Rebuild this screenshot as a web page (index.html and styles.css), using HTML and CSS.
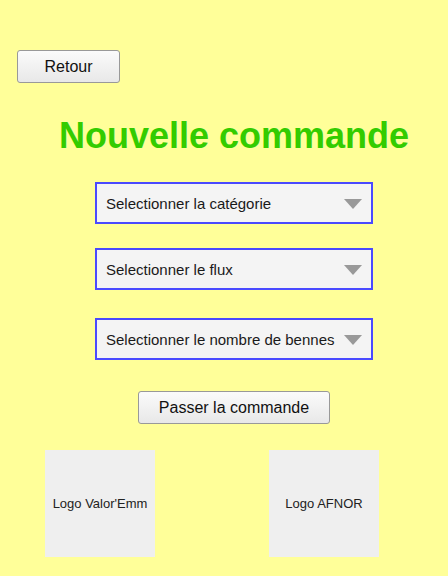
FILE: index.html
```html
<!DOCTYPE html>
<html lang="fr">
<head>
<meta charset="utf-8">
<title>Nouvelle commande</title>
<link rel="stylesheet" href="styles.css">
</head>
<body>
<div class="page">
  <div class="top">
    <button class="btn back">Retour</button>
  </div>
  <main class="main">
    <h1 class="title">Nouvelle commande</h1>
    <div class="select s1"><span>Selectionner la catégorie</span><i class="arrow"></i></div>
    <div class="select s2"><span>Selectionner le flux</span><i class="arrow"></i></div>
    <div class="select s3"><span>Selectionner le nombre de bennes</span><i class="arrow"></i></div>
    <button class="btn order">Passer la commande</button>
  </main>
  <div class="logos">
    <div class="logo l1">Logo Valor'Emm</div>
    <div class="logo l2">Logo AFNOR</div>
  </div>
</div>
</body>
</html>
```
FILE: styles.css
```css
html, body {
  margin: 0;
  padding: 0;
  background: #ffff99;
  font-family: "Liberation Sans", Arial, sans-serif;
}
.page {
  width: 448px;
  height: 576px;
  overflow: hidden;
}
.top {
  padding: 50px 0 0 17px;
}
.btn {
  font-family: "Liberation Sans", Arial, sans-serif;
  font-size: 16px;
  color: #111;
  background: linear-gradient(#fbfbfb, #e8e8e8);
  border: 1px solid #999;
  border-radius: 3px;
  height: 33px;
  padding: 0;
  box-sizing: border-box;
}
.back {
  width: 103px;
}
.main {
  display: flex;
  flex-direction: column;
  align-items: center;
  padding-left: 20px;
}
.title {
  margin: 32px 0 0 0;
  font-size: 36px;
  line-height: 42px;
  font-weight: bold;
  color: #33cc00;
}
.select {
  box-sizing: border-box;
  width: 278px;
  height: 42px;
  border: 2px solid #4a4aff;
  background: #f4f4f4;
  display: flex;
  align-items: center;
  justify-content: space-between;
  padding: 0 9px 0 9px;
  font-size: 15px;
  color: #1a1a1a;
}
.s1 { margin-top: 25px; }
.s2 { margin-top: 24px; }
.s3 { margin-top: 28px; }
.arrow {
  width: 0;
  height: 0;
  border-left: 9px solid transparent;
  border-right: 9px solid transparent;
  border-top: 10px solid #999;
  margin-top: 2px;
}
.order {
  margin-top: 31px;
  width: 192px;
}
.logos {
  display: flex;
  padding-left: 45px;
  gap: 114px;
  margin-top: 26px;
}
.logo {
  width: 110px;
  height: 107px;
  background: #efefef;
  display: flex;
  align-items: center;
  justify-content: center;
  font-size: 13px;
  color: #222;
}
```
